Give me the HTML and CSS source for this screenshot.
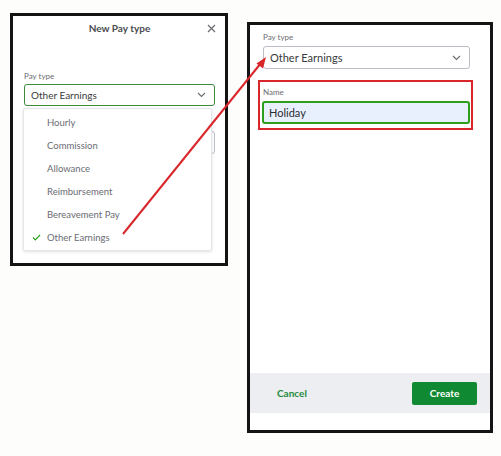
FILE: index.html
```html
<!DOCTYPE html>
<html>
<head>
  <meta charset="utf-8">
  <title>New Pay type</title>
  <link rel="stylesheet" href="styles.css">
</head>
<body>
  <div class="board">
    <!-- dialog with the pay type menu open -->
    <div class="panel panel-left">
      <div class="dlg-head">
        <span class="dlg-title">New Pay type</span>
        <svg class="close" width="9" height="9" viewBox="0 0 9 9"><path d="M1 1 L8 8 M8 1 L1 8" stroke="#6b6c72" stroke-width="1.2" fill="none"/></svg>
      </div>
      <div class="field">
        <div class="lbl">Pay type</div>
        <div class="select select-active">
          <span>Other Earnings</span>
          <svg width="9" height="6" viewBox="0 0 9 6"><path d="M1 1 L4.5 4.5 L8 1" stroke="#6b6c72" stroke-width="1.1" fill="none"/></svg>
        </div>
        <ul class="menu">
          <li>Hourly</li>
          <li>Commission</li>
          <li>Allowance</li>
          <li>Reimbursement</li>
          <li>Bereavement Pay</li>
          <li class="picked">
            <svg class="tick" width="9" height="7" viewBox="0 0 9 7"><path d="M1 3.5 L3.3 5.8 L8 1" stroke="#2ca01c" stroke-width="1.2" fill="none"/></svg>
            Other Earnings
          </li>
        </ul>
      </div>
      <div class="field">
        <div class="lbl">Name</div>
        <div class="input"></div>
      </div>
    </div>

    <!-- dialog after picking Other Earnings -->
    <div class="panel panel-right">
      <div class="field">
        <div class="lbl">Pay type</div>
        <div class="select">
          <span>Other Earnings</span>
          <svg width="9" height="6" viewBox="0 0 9 6"><path d="M1 1 L4.5 4.5 L8 1" stroke="#6b6c72" stroke-width="1.1" fill="none"/></svg>
        </div>
      </div>
      <div class="field name-box">
        <div class="lbl">Name</div>
        <div class="input input-filled">Holiday</div>
      </div>
      <div class="dlg-foot">
        <span class="cancel">Cancel</span>
        <span class="btn-create">Create</span>
      </div>
    </div>
  </div>

  <svg class="arrow" width="501" height="456" viewBox="0 0 501 456">
    <line x1="123" y1="234" x2="261" y2="63" stroke="#d9262b" stroke-width="2"/>
    <polygon points="266,57 263,68.5 256.5,63.5" fill="#d9262b"/>
  </svg>
</body>
</html>
```

FILE: styles.css
```css
body {
  margin: 0;
  background: #fdfdfc;
  font-family: Lato, "Noto Sans", sans-serif;
  color: #393a3d;
}
.board {
  display: flex;
  align-items: flex-start;
}
.panel {
  box-sizing: border-box;
  background: #fff;
  border: 3px solid #141414;
  display: flex;
  flex-direction: column;
}
.panel-left {
  width: 218px;
  height: 253px;
  margin: 13px 0 0 10px;
  padding: 0 10px 0 11px;
}
.panel-right {
  width: 246px;
  height: 411px;
  margin: 22px 0 0 19px;
  padding: 7px 20px 0 13px;
}
.dlg-head {
  height: 24px;
  display: flex;
  align-items: center;
  justify-content: center;
  position: relative;
  margin-bottom: 31px;
}
.dlg-title {
  font-size: 10px;
  font-weight: 700;
  color: #4a4b4f;
}
.close {
  position: absolute;
  right: -1px;
  top: 8px;
}
.field {
  position: relative;
}
.lbl {
  font-size: 8px;
  line-height: 10px;
  color: #6b6c72;
  margin-bottom: 3px;
}
.panel-right .lbl {
  margin-bottom: 4px;
}
.select {
  box-sizing: border-box;
  height: 23px;
  border: 1px solid #babec5;
  border-radius: 3px;
  display: flex;
  align-items: center;
  justify-content: space-between;
  padding: 0 8px 0 6px;
  font-size: 11px;
}
.select-active {
  height: 22px;
  border: 1px solid #3d8a3d;
  padding: 0 8px 0 6px;
  font-size: 10px;
}
.menu {
  position: absolute;
  top: 37px;
  left: -1px;
  right: 3px;
  margin: 0;
  padding: 2px 0 1px;
  list-style: none;
  background: #fff;
  border: 1px solid #e4e6e9;
  border-radius: 2px;
  box-shadow: 0 1px 3px rgba(0, 0, 0, 0.12);
  z-index: 2;
}
.menu li {
  height: 23px;
  display: flex;
  align-items: center;
  padding-left: 23px;
  font-size: 9.5px;
  color: #6b6c72;
  position: relative;
}
.tick {
  position: absolute;
  left: 8px;
  top: 8px;
}
.panel-left .field + .field {
  margin-top: 12px;
}
.input {
  box-sizing: border-box;
  height: 23px;
  border: 1px solid #babec5;
  border-radius: 3px;
}
.name-box {
  margin: 11px -3px 0 -5px;
  border: 2px solid #d8262b;
  padding: 5px 1px 4px 2px;
}
.name-box .lbl {
  padding-left: 1px;
}
.input-filled {
  border: 2px solid #2ca01c;
  background: #e8f0fe;
  display: flex;
  align-items: center;
  padding-left: 5px;
  font-size: 11px;
  color: #2b2c2f;
}
.dlg-foot {
  margin: auto -20px 17px -13px;
  height: 40px;
  background: #eceef1;
  display: flex;
  align-items: center;
  justify-content: space-between;
  padding: 0 13px 0 27px;
}
.cancel {
  font-size: 10px;
  font-weight: 700;
  color: #1f8a3b;
}
.btn-create {
  width: 65px;
  height: 23px;
  background: #108a32;
  border-radius: 2px;
  color: #fff;
  font-size: 10px;
  font-weight: 700;
  display: flex;
  align-items: center;
  justify-content: center;
}
.arrow {
  position: absolute;
  left: 0;
  top: 0;
  z-index: 5;
  pointer-events: none;
}
```
